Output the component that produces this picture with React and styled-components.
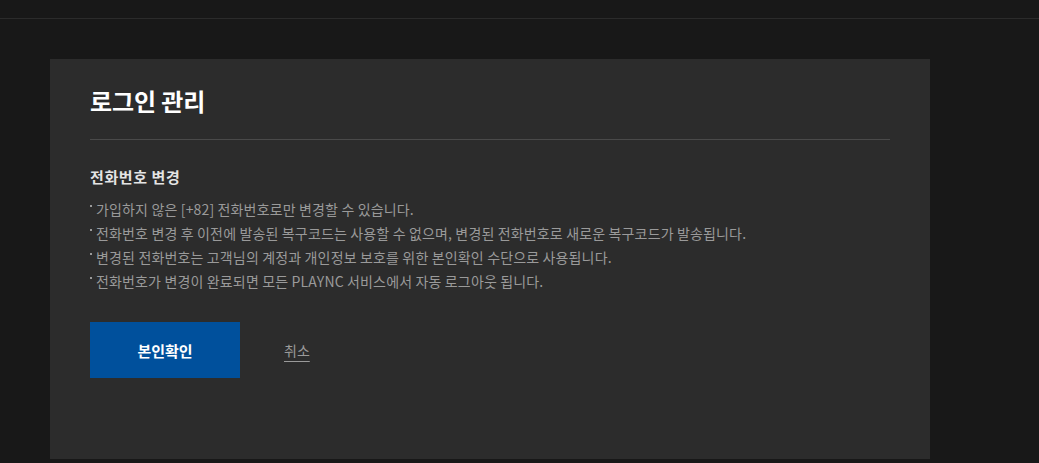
import React from "react";
import styled, { createGlobalStyle } from "styled-components";

const GlobalStyle = createGlobalStyle`
    html, body {
        margin: 0;
        padding: 0;
        background: #181818;
        font-family: "Noto Sans CJK KR", "Noto Sans", sans-serif;
    }
`;

const Wrapper = styled.div`
    min-height: 463px;
    background: #181818;
`;

const TopBar = styled.header`
    height: 18px;
    border-bottom: 1px solid #2b2b2b;
`;

const Panel = styled.section`
    width: 880px;
    height: 400px;
    box-sizing: border-box;
    margin: 40px 0 0 50px;
    padding: 24px 40px 0;
    background: #2c2c2c;
`;

const Title = styled.h1`
    margin: 0;
    font-size: 24px;
    font-weight: 700;
    line-height: 36px;
    color: #ffffff;
    letter-spacing: -0.1px;
    padding-bottom: 20px;
    border-bottom: 1px solid #4a4a4a;
`;

const SubTitle = styled.h2`
    margin: 26px 0 9px;
    font-size: 15px;
    font-weight: 700;
    line-height: 22px;
    color: #e4e4e4;
    letter-spacing: 0.6px;
`;

const Notes = styled.ul`
    margin: 0;
    padding: 0;
    list-style: none;
`;

const Note = styled.li`
    position: relative;
    padding-left: 6px;
    font-size: 14px;
    line-height: 24px;
    color: #9a9a9a;
    letter-spacing: 0.15px;
    &::before {
        content: "";
        position: absolute;
        left: 0;
        top: 8px;
        width: 2px;
        height: 2px;
        background: #9a9a9a;
    }
`;

const Actions = styled.div`
    display: flex;
    align-items: center;
    gap: 44px;
    margin-top: 29px;
`;

const PrimaryButton = styled.button`
    width: 150px;
    height: 56px;
    border: 0;
    background: #00509c;
    color: #ffffff;
    font-family: inherit;
    font-size: 15px;
    font-weight: 700;
    letter-spacing: 0;
    cursor: pointer;
`;

const CancelLink = styled.a`
    font-size: 14px;
    color: #9a9a9a;
    text-decoration: underline;
    text-underline-offset: 5px;
    cursor: pointer;
`;

const notes = [
    "가입하지 않은 [+82] 전화번호로만 변경할 수 있습니다.",
    "전화번호 변경 후 이전에 발송된 복구코드는 사용할 수 없으며, 변경된 전화번호로 새로운 복구코드가 발송됩니다.",
    "변경된 전화번호는 고객님의 계정과 개인정보 보호를 위한 본인확인 수단으로 사용됩니다.",
    "전화번호가 변경이 완료되면 모든 PLAYNC 서비스에서 자동 로그아웃 됩니다.",
];

export default function App() {
    return (
        <Wrapper>
            <GlobalStyle />
            <TopBar />
            <Panel>
                <Title>로그인 관리</Title>
                <SubTitle>전화번호 변경</SubTitle>
                <Notes>
                    {notes.map((n) => (
                        <Note key={n}>{n}</Note>
                    ))}
                </Notes>
                <Actions>
                    <PrimaryButton>본인확인</PrimaryButton>
                    <CancelLink>취소</CancelLink>
                </Actions>
            </Panel>
        </Wrapper>
    );
}
